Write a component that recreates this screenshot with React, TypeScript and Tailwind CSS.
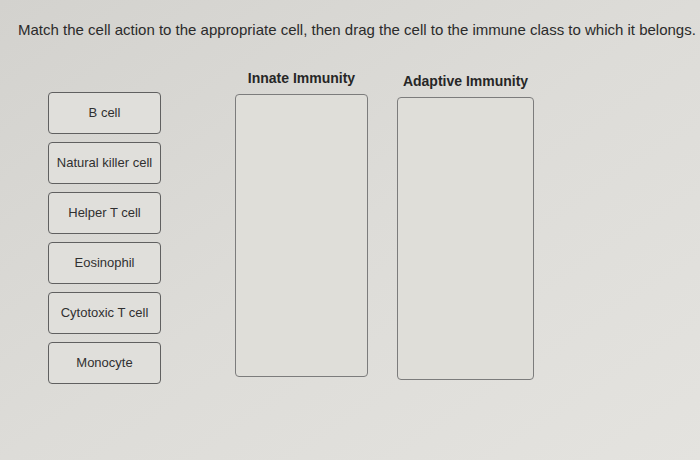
const cells = [
  "B cell",
  "Natural killer cell",
  "Helper T cell",
  "Eosinophil",
  "Cytotoxic T cell",
  "Monocyte",
];

const classes = [
  { name: "Innate Immunity", offset: "mt-[28px]", width: "w-[133px]", margin: "ml-[74px]" },
  { name: "Adaptive Immunity", offset: "mt-[31px]", width: "w-[137px]", margin: "ml-[29px]" },
];

export default function App() {
  return (
    <div className="w-[700px] h-[460px] overflow-hidden bg-gradient-to-br from-[#d3d2ce] via-[#dddcd8] to-[#e4e3df] font-['Liberation_Sans',Arial,sans-serif] text-[#2b2b2b]">
      <p className="pl-[18px] pt-[20px] text-[15px] leading-[20px] whitespace-nowrap">
        Match the cell action to the appropriate cell, then drag the cell to the immune class to which it belongs.
      </p>

      <div className="flex items-start">
        <div className="ml-[48px] mt-[52px] flex flex-col gap-2">
          {cells.map((cell) => (
            <div
              key={cell}
              className="w-[113px] h-[42px] flex items-center justify-center rounded-[4px] border border-[#606060] bg-[#e0dfdb] text-[13px] text-[#303030]"
            >
              {cell}
            </div>
          ))}
        </div>

        {classes.map((c) => (
          <div key={c.name} className={`${c.margin} ${c.offset} flex flex-col items-center`}>
            <h3 className="h-[20px] leading-[20px] text-[14px] font-bold text-[#262626] whitespace-nowrap">
              {c.name}
            </h3>
            <div className={`${c.width} h-[283px] mt-[6px] rounded-[4px] border border-[#7c7c7c] bg-[#dfded9]`} />
          </div>
        ))}
      </div>
    </div>
  );
}
